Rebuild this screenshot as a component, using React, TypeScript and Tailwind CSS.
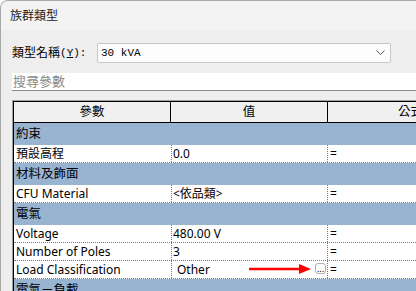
import React from "react";

const cjk = { fontFamily: '"Noto Sans", "Noto Sans CJK TC", sans-serif' };

function GroupRow({ label }: { label: string }) {
  return (
    <div className="h-[22px] bg-[#99b4d1] flex items-center pl-[2px] text-[12.5px] text-black whitespace-nowrap">
      {label}
    </div>
  );
}

function DataRow({
  name,
  value,
  extra,
}: {
  name: string;
  value: string;
  extra?: boolean;
}) {
  return (
    <div className="h-[18px] flex border-b border-dotted border-[#7a7a7a] bg-white text-[12px] text-black">
      <div className="w-[158px] shrink-0 border-r border-dotted border-[#7a7a7a] pl-[2px] flex items-center whitespace-nowrap">
        {name}
      </div>
      <div className="w-[156px] shrink-0 border-r border-dotted border-[#7a7a7a] pl-[1px] flex items-center relative whitespace-nowrap">
        <span className={extra ? "pl-[4px]" : ""}>{value}</span>
        {extra && (
          <>
            <svg
              className="absolute left-[77px] top-[2px]"
              width="64"
              height="12"
              viewBox="0 0 64 12"
            >
              <line x1="0" y1="6" x2="52" y2="6" stroke="#ff0000" strokeWidth="2.4" />
              <polygon points="50,1 62,6 50,11" fill="#ff0000" />
            </svg>
            <div className="absolute left-[143px] top-[2px] w-[11px] h-[11px] border border-[#b0b0b0] rounded-[3px] bg-white flex items-end justify-center text-[9px] leading-[8px]">
              ...
            </div>
          </>
        )}
      </div>
      <div className="flex-1 pl-[2px] flex items-center">=</div>
    </div>
  );
}

export default function App() {
  return (
    <div className="w-[416px] h-[291px] overflow-hidden bg-white" style={cjk}>
      <div className="w-[430px] h-[300px] border-l border-t border-[#a8a8a8] rounded-tl-[8px] bg-[#eeeeee] overflow-hidden">
        <div className="h-[29px] bg-[#f3f3f3] pl-[9px] flex items-center text-[12px] text-[#1a1a1a]">
          族群類型
        </div>
        <div className="pl-[11px]">
          <div className="mt-[13px] flex items-center h-[20px]">
            <div className="w-[85px] shrink-0 text-[12px] text-black flex items-center">
              <span>類型名稱</span>
              <span style={{ fontFamily: '"Liberation Mono", monospace' }} className="text-[11px]">
                (<span className="underline">Y</span>):
              </span>
            </div>
            <div className="w-[294px] h-[20px] border border-[#c8c8c8] rounded-[2px] bg-[#fdfdfd] flex items-center justify-between pl-[3px] pr-[5px]">
              <span style={{ fontFamily: '"Liberation Mono", monospace' }} className="text-[11px] text-black">
                30 kVA
              </span>
              <svg width="9" height="6" viewBox="0 0 9 6">
                <polyline points="0.5,0.5 4.5,4.5 8.5,0.5" fill="none" stroke="#555" strokeWidth="1" />
              </svg>
            </div>
          </div>
          <div className="mt-[10px] h-[18px] w-[420px] bg-white border-b border-[#8c8c8c] flex items-center pl-[1px] text-[13px] text-[#8a8a8a]">
            搜尋參數
          </div>
          <div className="mt-[9px] w-[420px] border-l border-t border-[#a0a0a0]">
            <div className="border-l border-t border-black">
              <div className="h-[21px] flex bg-[#f0f0f0] border-b border-black text-[12.5px] text-black">
                <div className="w-[157px] shrink-0 border-r border-black flex items-center justify-center">參數</div>
                <div className="w-[157px] shrink-0 border-r border-black flex items-center justify-center">值</div>
                <div className="w-[100px] shrink-0 flex items-center pl-[70px]">公式</div>
              </div>
              <GroupRow label="約束" />
              <DataRow name="預設高程" value="0.0" />
              <GroupRow label="材料及飾面" />
              <DataRow name="CFU Material" value="<依品類>" />
              <GroupRow label="電氣" />
              <DataRow name="Voltage" value="480.00 V" />
              <DataRow name="Number of Poles" value="3" />
              <DataRow name="Load Classification" value="Other" extra />
              <GroupRow label="電氣－負載" />
            </div>
          </div>
        </div>
      </div>
    </div>
  );
}
